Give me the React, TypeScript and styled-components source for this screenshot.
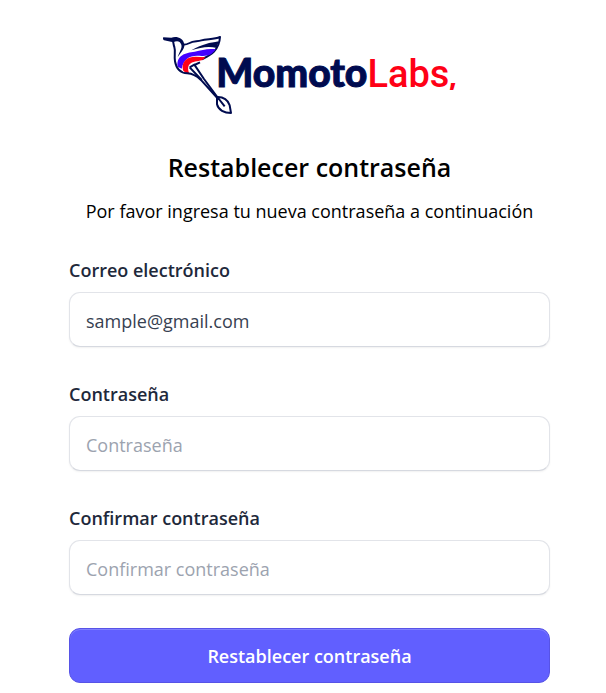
import React, { useState } from "react";
import styled, { createGlobalStyle } from "styled-components";

const GlobalStyle = createGlobalStyle`
  *, *::before, *::after { box-sizing: border-box; }
  body {
    margin: 0;
    background: #fff;
    color: #000;
    font-family: "Open Sans", "Noto Sans", sans-serif;
  }
`;

const Page = styled.main`
  padding: 36px 56px 11px 69px;
`;

const Brand = styled.div`
  display: flex;
  justify-content: center;
  align-items: flex-start;
  height: 80px;
`;

const Bird = styled.svg`
  width: 72px;
  height: 80px;
  margin-right: -18px;
  flex: none;
`;

const Wordmark = styled.span`
  display: flex;
  align-items: baseline;
  padding-top: 12px;
  line-height: 48px;
`;

const Momoto = styled.span`
  color: #000b4f;
  font-family: Lato, sans-serif;
  font-weight: 900;
  font-size: 39px;
  -webkit-text-stroke: 1px #000b4f;
`;

const Labs = styled.span`
  color: #ff0016;
  font-family: Roboto, sans-serif;
  font-weight: 500;
  font-size: 38px;
`;

const Comma = styled.span`
  color: #ff0016;
  font-family: "Open Sans", sans-serif;
  font-weight: 800;
  font-size: 24px;
`;

const Title = styled.h1`
  margin: 33px 0 0;
  font-size: 25px;
  line-height: 36px;
  font-weight: 600;
  text-align: center;
`;

const Subtitle = styled.p`
  margin: 12px 0 0;
  font-size: 18px;
  line-height: 28px;
  text-align: center;
`;

const Form = styled.form`
  display: flex;
  flex-direction: column;
  gap: 33px;
  margin-top: 31px;
`;

const Field = styled.div`
  display: flex;
  flex-direction: column;
  gap: 8px;
`;

const Label = styled.label`
  color: #1e293b;
  font-size: 18px;
  line-height: 28px;
  font-weight: 600;
`;

const Input = styled.input`
  width: 100%;
  height: 55px;
  padding: 2px 16px 0;
  border: 1px solid #e2e4e9;
  border-bottom-color: #d6d9e0;
  border-radius: 11px;
  background: #fff;
  box-shadow: 0 1px 2px rgba(0, 0, 0, 0.06);
  color: #374151;
  font: inherit;
  font-size: 18px;

  &::placeholder {
    color: #9ca3af;
    opacity: 1;
  }
`;

const Submit = styled.button`
  height: 55px;
  border: 1px solid #5753e6;
  border-radius: 11px;
  background: #615fff;
  box-shadow: inset 0 1px 0 #8180ff;
  color: #fff;
  font: inherit;
  font-size: 18px;
  font-weight: 600;
  cursor: pointer;
`;

const BirdLogo = () => (
  <Bird viewBox="20 18 216 240" fill="none" aria-hidden="true">
    <path
      d="M83 44C87 44 96 43 103 39C114 32 125 35 138 31C154 26 176 29 194 21C193 38 187 53 176 65C166 76 154 81 139 88"
      stroke="#000b4f" strokeWidth="6" strokeLinejoin="round"
    />
    <path d="M108 61C126 50 140 45 152 42C164 38 176 38 190 34L184 54C160 48 136 52 108 61Z" fill="#000b4f" />
    <path d="M67 110C62 76 90 68 118 65C140 61 158 54 181 58C171 74 158 79 139 78C108 74 86 82 79 116Z" fill="#4300ff" />
    <path d="M83 121C76 91 100 79 122 80L150 82C143 94 128 92 115 96C100 100 94 111 102 131Q89 130 83 121Z" fill="#ff0016" />
    <path
      d="M52 31C55 37 54 44 57 51C61 63 56 78 59 94C63 117 76 129 96 130C111 131 122 136 136 149L186 204"
      stroke="#000b4f" strokeWidth="6" strokeLinejoin="round"
    />
    <path d="M24 22L48 23C61 17 84 22 87 43C89 56 75 68 67 82C72 64 81 55 78 44C74 32 64 31 54 37L26 31Q21 26 24 22Z" fill="#000b4f" />
    <path
      d="M103 112L117 104L146 147L187 203M103 112L139 150M117 105L134 97"
      stroke="#000b4f" strokeWidth="6" strokeLinejoin="round"
    />
    <path
      d="M185 201C204 200 219 210 223 226L227 249C207 249 189 240 185 223ZM186 201L208 229"
      stroke="#000b4f" strokeWidth="6" strokeLinejoin="round"
    />
  </Bird>
);

type FormFieldProps = {
  id: string;
  label: string;
  type: string;
  placeholder?: string;
  initial?: string;
};

const FormField = ({ id, label, type, placeholder, initial = "" }: FormFieldProps) => {
  const [value, setValue] = useState(initial);
  return (
    <Field>
      <Label htmlFor={id}>{label}</Label>
      <Input
        id={id}
        type={type}
        placeholder={placeholder}
        value={value}
        onChange={(event) => setValue(event.target.value)}
      />
    </Field>
  );
};

export default function App() {
  return (
    <>
      <GlobalStyle />
      <Page>
        <Brand>
          <BirdLogo />
          <Wordmark>
            <Momoto>Momoto</Momoto>
            <Labs>Labs</Labs>
            <Comma>,</Comma>
          </Wordmark>
        </Brand>
        <Title>Restablecer contraseña</Title>
        <Subtitle>Por favor ingresa tu nueva contraseña a continuación</Subtitle>
        <Form onSubmit={(event) => event.preventDefault()}>
          <FormField id="email" label="Correo electrónico" type="email" initial="sample@gmail.com" />
          <FormField id="password" label="Contraseña" type="password" placeholder="Contraseña" />
          <FormField id="confirm" label="Confirmar contraseña" type="password" placeholder="Confirmar contraseña" />
          <Submit type="submit">Restablecer contraseña</Submit>
        </Form>
      </Page>
    </>
  );
}
